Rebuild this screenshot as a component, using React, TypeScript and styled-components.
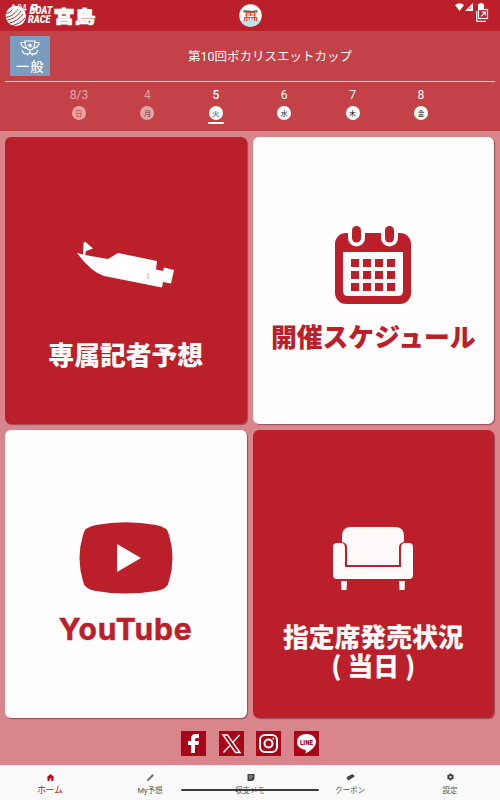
import React from "react";
import styled, { createGlobalStyle } from "styled-components";

const RED = "#bb202a";

const Global = createGlobalStyle`
  * { box-sizing: border-box; }
  body { margin: 0; font-family: Roboto, "Noto Sans CJK JP", sans-serif; }
`;

const Screen = styled.div`
  width: 500px;
  height: 800px;
  display: flex;
  flex-direction: column;
  background: #d9858c;
  overflow: hidden;
`;

const Header = styled.header`
  position: relative;
  height: 31px;
  flex: none;
  display: flex;
  justify-content: center;
  background: ${RED};
  color: #fff;
`;

const Logo = styled.svg`
  position: absolute;
  left: 0;
  top: 0;
`;

const Torii = styled.svg`
  margin-top: 4px;
`;

const StatusIcons = styled.svg`
  position: absolute;
  right: 0;
  top: 0;
`;

const Race = styled.section`
  height: 100px;
  flex: none;
  background: #c44148;
  color: #fff;
`;

const TitleRow = styled.div`
  height: 51px;
  margin: 0 5px;
  padding: 5px 5px 0;
  display: grid;
  grid-template-columns: 40px 1fr;
  align-items: start;
  border-bottom: 1px solid #fbdcdd;
`;

const Grade = styled.div`
  width: 40px;
  height: 40px;
  background: #7b9bbf;
  display: flex;
  flex-direction: column;
  align-items: center;
  padding-top: 4px;
  font: 500 13px/17px "Noto Sans CJK JP", sans-serif;
  letter-spacing: 1.5px;
  text-indent: 1px;
`;

const Title = styled.h1`
  margin: 11px 0 0;
  text-align: center;
  font: 400 12.5px/20px Roboto, "Noto Sans CJK JP", sans-serif;
`;

const Days = styled.div`
  display: grid;
  grid-template-columns: repeat(6, 1fr);
  padding: 5px 44.8px 0;
`;

const Day = styled.div<{ $past?: boolean; $active?: boolean }>`
  display: flex;
  flex-direction: column;
  align-items: center;
  opacity: ${(p) => (p.$past ? 0.52 : 1)};
  font-size: 12px;
  font-weight: ${(p) => (p.$active ? 500 : 400)};
  line-height: 16px;
`;

const Weekday = styled.span<{ $sunday?: boolean }>`
  width: 14px;
  height: 14px;
  margin-top: 3px;
  border-radius: 50%;
  background: #fff;
  color: ${(p) => (p.$sunday ? "#f00" : "#222")};
  font: 400 7px/14px "Noto Sans CJK JP", sans-serif;
  text-align: center;
`;

const ActiveBar = styled.i`
  width: 16px;
  height: 2px;
  margin-top: 2px;
  border-radius: 1px;
  background: #fff;
`;

const Cards = styled.main`
  display: grid;
  grid-template-columns: 241.5px 241.5px;
  grid-template-rows: 287.5px 287.5px;
  gap: 6px;
  padding: 5.5px 5px 0;
  height: 587px;
  flex: none;
`;

const Card = styled.section<{ $light?: boolean; $top: number }>`
  border-radius: 6px;
  background: ${(p) => (p.$light ? "#fffdfd" : RED)};
  color: ${(p) => (p.$light ? RED : "#fffafa")};
  box-shadow: 1px 1px 1px rgba(100, 35, 40, 0.55);
  display: flex;
  flex-direction: column;
  align-items: center;
  padding-top: ${(p) => p.$top}px;
`;

const Label = styled.div<{ $gap: number }>`
  margin-top: ${(p) => p.$gap}px;
  font: 900 25.8px/29px "Noto Sans CJK JP", sans-serif;
  text-align: center;
  white-space: nowrap;
`;

const LatinLabel = styled(Label)`
  font: 700 30px/30px Inter, sans-serif;
  letter-spacing: 0.9px;
  -webkit-text-stroke: 0.5px ${RED};
`;

const Social = styled.div`
  display: flex;
  justify-content: center;
  gap: 12.7px;
  padding-top: 13px;
  height: 47px;
  flex: none;
`;

const SocialIcon = styled.svg`
  background: #a90518;
`;

const Nav = styled.nav`
  position: relative;
  flex: 1;
  display: grid;
  grid-template-columns: repeat(5, 1fr);
  background: #fafafa;
  border-top: 1px solid #f9eeee;
`;

const NavItem = styled.div<{ $active?: boolean }>`
  display: flex;
  flex-direction: column;
  align-items: center;
  gap: 2px;
  padding-top: 6px;
  color: ${(p) => (p.$active ? "#b80d19" : "#555")};
  font-size: ${(p) => (p.$active ? 8.6 : 7.5)}px;
  line-height: 13px;
`;

const GestureBar = styled.i`
  position: absolute;
  left: 181px;
  top: 23px;
  width: 138px;
  height: 2px;
  border-radius: 1px;
  background: #3b3b3b;
`;

const days = [
  { n: "8/3", w: "日", past: true },
  { n: "4", w: "月", past: true },
  { n: "5", w: "火", active: true },
  { n: "6", w: "水" },
  { n: "7", w: "木" },
  { n: "8", w: "金" },
];

const HeaderLogo = () => (
  <Logo width="105" height="31" viewBox="0 0 105 31">
    <circle cx="15.8" cy="16" r="10.2" fill="#fff" />
    <g fill="none" stroke={RED} strokeWidth="1">
      <path d="M4 14q6 0 10-6M4.500 17.500Q13 17 18 9M6 20.500Q16 19 21 11M8.500 23.500Q18 21 23 14M12 26q8-2 13-8" />
    </g>
    <g fill="#fff" fontFamily="Roboto, sans-serif">
      <text x="10.500" y="11" fontSize="8.500" fontWeight="500" textLength="16" lengthAdjust="spacingAndGlyphs">4:04</text>
      <text x="29.500" y="14" fontSize="10.500" fontWeight="900" fontStyle="italic" textLength="23" lengthAdjust="spacingAndGlyphs">BOAT</text>
      <text x="28" y="22.800" fontSize="10.500" fontWeight="900" fontStyle="italic" textLength="22.500" lengthAdjust="spacingAndGlyphs">RACE</text>
      <text x="53.500" y="22.500" fontSize="17" fontWeight="900" fontFamily="Noto Sans CJK JP, sans-serif" stroke="#fff" strokeWidth=".7" textLength="42" lengthAdjust="spacingAndGlyphs">宮島</text>
    </g>
    <path d="M31.500 4h6v6.500h-6z" fill="#fff" />
    <path d="M33.500 6h2v1.500h-2z" fill={RED} />
  </Logo>
);

const Boat = () => (
  <svg width="98" height="50" viewBox="0 0 98 50">
    <path fill="#fff" d="M0 12 6 13.500 6.500 2 8 .5 16 7.500 9 10 8 14 31 18 41 12 80 20 79 28.500 86 30 87 26.500 97 29 94 42.500 86 41 85 46.500 27 35Q14 31 0 12Z" />
    <path d="M71.500 32q-1.500 3 0 6" stroke="#e9a3a8" fill="none" />
  </svg>
);

const Calendar = () => (
  <svg width="76" height="78" viewBox="0 0 76 78">
    <rect y="7" width="76" height="71" rx="11" fill={RED} />
    <path d="M8 26h60v39q0 5-5 5H13q-5 0-5-5z" fill="#fffdfd" />
    <rect x="13" y="-4" width="17" height="24.500" rx="8.500" fill="#fffdfd" />
    <rect x="46" y="-4" width="17" height="24.500" rx="8.500" fill="#fffdfd" />
    <rect x="17" y="0" width="9" height="16.500" rx="4.500" fill={RED} />
    <rect x="50" y="0" width="9" height="16.500" rx="4.500" fill={RED} />
    {[33, 45, 57].map((y) =>
      [16, 28, 40, 52].map((x) => <rect key={`${x}-${y}`} x={x} y={y} width="8" height="8" fill={RED} />)
    )}
  </svg>
);

const Play = () => (
  <svg width="94" height="72" viewBox="0 0 94 72">
    <path fill={RED} d="M4 13Q5 5 17 3Q46-2.500 77 3Q89 5 90 13Q97 36 90 59Q89 67 77 69Q46 74 17 69Q5 67 4 59Q-3 36 4 13Z" />
    <path fill="#fff" d="M38 22 62 36 38 50Z" />
  </svg>
);

const Sofa = () => (
  <svg width="80" height="65" viewBox="0 0 80 65" fill="#fffafa">
    <path d="M9 15V9Q9 0 18 0H62Q71 0 71 9V15Q66 16 66 20V38H14V20Q14 16 9 15Z" />
    <path d="M0 20Q0 16 4 16H8Q12 16 12 21V40H68V21Q68 16 72 16H76Q80 16 80 20V48Q80 52 76 52H4Q0 52 0 48ZM8 54h6l-.5 9h-5zM66 54h6l-.5 9h-5z" />
  </svg>
);

const navPaths = {
  home: <path d="M0 4.500 4 1 8 4.500H7V8H4.800V5.600H3.200V8H1V4.500Z" />,
  pencil: <path d="M.5 6.500 6 1 7.500 2.500 2 8H.5Z" />,
  memo: <><path d="M1 1h7v5L6 8H1z" /><path d="M2.500 3h4M2.500 5h3" stroke="#fafafa" strokeWidth=".6" /></>,
  coupon: <path d="M.3 4 6 1l.5 1 1 0 .5 1.500L2 7.500l-.5-1-1 0z" />,
  gear: <><g stroke="#444" strokeWidth="2"><path d="M4 .5v7M1 2.300l6 3.400M1 5.700l6-3.400" /></g><circle cx="4" cy="4" r="2.700" /><circle cx="4" cy="4" r="1.100" fill="#fafafa" /></>,
};

const NavIcon = ({ name }: { name: keyof typeof navPaths }) => (
  <svg width="9" height="10" viewBox="-.5 -1 9 10" fill={name === "home" ? "#b80d19" : name === "pencil" ? "#777" : "#444"}>
    {navPaths[name]}
  </svg>
);

const navItems: { label: string; icon: keyof typeof navPaths }[] = [
  { label: "ホーム", icon: "home" },
  { label: "My予想", icon: "pencil" },
  { label: "収支メモ", icon: "memo" },
  { label: "クーポン", icon: "coupon" },
  { label: "設定", icon: "gear" },
];

export default function App() {
  return (
    <Screen>
      <Global />
      <Header>
        <HeaderLogo />
        <Torii width="23" height="23" viewBox="0 0 23 23">
          <circle cx="11.500" cy="11.500" r="11.200" fill="#fff" />
          <path d="M1 16h21q-3 6-10.500 6.500Q4 22 1 16" fill="#b9e2f2" />
          <path d="M5 6q6 1.500 13 0l1 1.500q-7 1.500-15 0z" fill="#2d7759" />
          <path d="M4.500 8q7 1.200 14 0M6 11h11M7.500 8v9M15.500 8v9M11.500 8v4M5 13.500h13M5.500 13v4M17.500 13v4M10 13v3M13 13v3" stroke="#e05236" strokeWidth="1.100" fill="none" />
        </Torii>
        <StatusIcons width="50" height="31" viewBox="0 0 50 31">
          <path fill="#fff" d="M5 5q4.500-3.500 9 0l-4.500 6zM23 3v8h-8zM28 4h1.500V3h3v1H34v7h-6z" />
          <path d="M21 6v3h-3z" fill={RED} opacity=".5" />
          <rect x="28.500" y="9.500" width="9" height="9" fill={RED} stroke="#fff" strokeWidth="1.200" />
          <path d="M26.700 11v10.300H36" fill="none" stroke="#fff" strokeWidth="1.200" />
          <path d="M31 16.300 35 12.300M31.700 12h3.600v3.600" fill="none" stroke="#fff" strokeWidth="1.200" />
        </StatusIcons>
      </Header>
      <Race>
        <TitleRow>
          <Grade>
            <svg width="20" height="17" viewBox="0 0 20 17" fill="none" stroke="#fff" strokeWidth="1.200">
              <path d="M5 1h10q0 9-5 9T5 1ZM5 2.500H1q0 5 6 6M15 2.500h4q0 5-6 6M10 10v3M7 15.500 10 12.500l3 3M2 10q1 5 6 3.500M18 10q-1 5-6 3.500" />
              <path d="m10 3 .8 1.500 1.700.2-1.300 1.200.3 1.700-1.500-.8-1.500.8.300-1.700-1.300-1.200 1.700-.2z" fill="#fff" stroke="none" />
            </svg>
            一般
          </Grade>
          <Title>第10回ポカリスエットカップ</Title>
        </TitleRow>
        <Days>
          {days.map((d) => (
            <Day key={d.n} $past={d.past} $active={d.active}>
              {d.n}
              <Weekday $sunday={d.w === "日"}>{d.w}</Weekday>
              {d.active && <ActiveBar />}
            </Day>
          ))}
        </Days>
      </Race>
      <Cards>
        <Card $top={104.5}>
          <Boat />
          <Label $gap={48}>専属記者予想</Label>
        </Card>
        <Card $light $top={89.5}>
          <Calendar />
          <Label $gap={17}>開催スケジュール</Label>
        </Card>
        <Card $light $top={92}>
          <Play />
          <LatinLabel $gap={20}>YouTube</LatinLabel>
        </Card>
        <Card $top={97}>
          <Sofa />
          <Label $gap={29}>
            指定席発売状況
            <br />( 当日 )
          </Label>
        </Card>
      </Cards>
      <Social>
        <SocialIcon width="25" height="25" viewBox="0 0 25 25">
          <path fill="#fff" d="M10 22v-8H7v-4h3V7.500Q10 3 14.500 3H18v4h-2q-2 0-2 1.500V10h4l-.5 4H14v8z" />
        </SocialIcon>
        <SocialIcon width="25" height="25" viewBox="0 0 25 25">
          <path d="M4 4h4.500L21 21.500h-4.500zM20.500 4 14 11.300M11 14.500 4.500 21.500" fill="none" stroke="#fff" strokeWidth="1.400" />
        </SocialIcon>
        <SocialIcon width="25" height="25" viewBox="0 0 25 25" fill="none" stroke="#fff" strokeWidth="2">
          <rect x="4" y="4" width="17" height="17" rx="5" />
          <circle cx="12.500" cy="12.500" r="4" />
          <circle cx="17.300" cy="7.700" r=".6" strokeWidth="1" />
        </SocialIcon>
        <SocialIcon width="25" height="25" viewBox="0 0 25 25">
          <path fill="#fff" d="M12.500 3C7 3 3 6.500 3 11q0 6.500 8.500 8 .8.300 0 3.500Q22 17 22 11c0-4.500-4-8-9.500-8" />
          <text x="12.500" y="13.500" fontSize="6.500" fontWeight="900" textAnchor="middle" textLength="13" lengthAdjust="spacingAndGlyphs" fill="#a90518">LINE</text>
        </SocialIcon>
      </Social>
      <Nav>
        {navItems.map((item, i) => (
          <NavItem key={item.label} $active={i === 0}>
            <NavIcon name={item.icon} />
            {item.label}
          </NavItem>
        ))}
        <GestureBar />
      </Nav>
    </Screen>
  );
}
